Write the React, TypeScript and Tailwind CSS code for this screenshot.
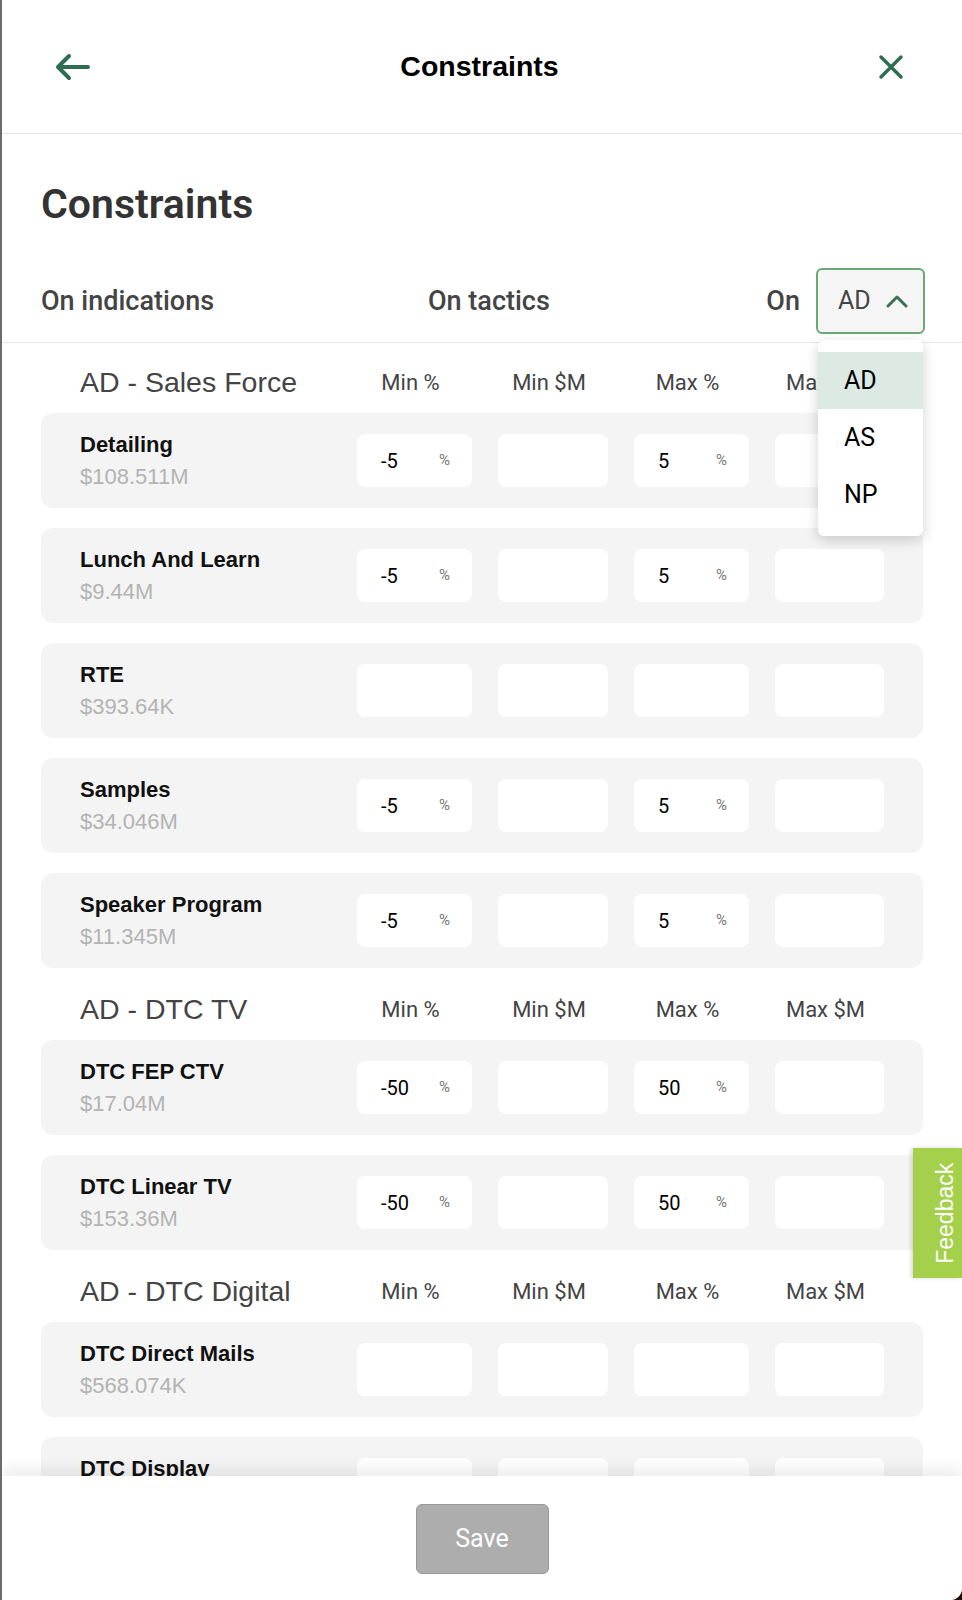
import { useState } from "react"

type Row = { name: string; value: string; min?: string; max?: string }
type Section = { title: string; rows: Row[] }

const sections: Section[] = [
  {
    title: "AD - Sales Force",
    rows: [
      { name: "Detailing", value: "$108.511M", min: "-5", max: "5" },
      { name: "Lunch And Learn", value: "$9.44M", min: "-5", max: "5" },
      { name: "RTE", value: "$393.64K" },
      { name: "Samples", value: "$34.046M", min: "-5", max: "5" },
      { name: "Speaker Program", value: "$11.345M", min: "-5", max: "5" },
    ],
  },
  {
    title: "AD - DTC TV",
    rows: [
      { name: "DTC FEP CTV", value: "$17.04M", min: "-50", max: "50" },
      { name: "DTC Linear TV", value: "$153.36M", min: "-50", max: "50" },
    ],
  },
  {
    title: "AD - DTC Digital",
    rows: [
      { name: "DTC Direct Mails", value: "$568.074K" },
      { name: "DTC Display", value: "$2.31M" },
    ],
  },
]

const columns = ["Min %", "Min $M", "Max %", "Max $M"]

const Field = ({ value, percent }: { value?: string; percent?: boolean }) => (
  <div className="flex h-[53px] items-center justify-between rounded-lg bg-white pl-6 pr-[22px]">
    <span className="font-['Roboto',sans-serif] text-[20px] text-black">{value}</span>
    {percent && <span className="font-['Roboto',sans-serif] text-[15px] text-[#777]">%</span>}
  </div>
)

const TacticCard = ({ row }: { row: Row }) => (
  <div className="mb-5 flex h-[95px] items-center rounded-xl bg-[#f4f4f4] pl-[39px] pr-[39px]">
    <div className="flex flex-1 flex-col font-['Liberation_Sans',Arial,sans-serif] text-[22px] leading-[32px]">
      <span className="font-bold text-[#111]">{row.name}</span>
      <span className="text-[#b3b3b3]">{row.value}</span>
    </div>
    <div className="grid grid-cols-[115px_110px_115px_109px] gap-x-[26px]">
      <Field value={row.min} percent={!!row.min} />
      <Field />
      <Field value={row.max} percent={!!row.max} />
      <Field />
    </div>
  </div>
)

const App = () => {
  const [open] = useState<boolean>(true)
  return (
    <div className="h-[1600px] w-[962px] bg-[#1b120c]">
      <div className="relative flex h-[1600px] flex-col overflow-hidden rounded-br-xl border-l-2 border-[#6b6b6b] bg-white">
        {/* header */}
        <div className="grid h-[134px] shrink-0 grid-cols-[1fr_auto_1fr] items-center border-b border-[#e4e4e4] pl-[53px] pr-[58px]">
          <svg width="36" height="28" viewBox="0 0 36 28" fill="none" stroke="#2f6d53" strokeWidth="4" strokeLinecap="round" strokeLinejoin="round">
            <path d="M33 14H3M14 3 3 14l11 11" />
          </svg>
          <h2 className="font-['Liberation_Sans',Arial,sans-serif] text-[28.5px] font-bold text-black">Constraints</h2>
          <svg className="justify-self-end" width="26" height="26" viewBox="0 0 26 26" fill="none" stroke="#2f6d53" strokeWidth="3.5" strokeLinecap="round">
            <path d="M3 3l20 20M23 3 3 23" />
          </svg>
        </div>

        {/* title + tabs */}
        <div className="shrink-0 border-b border-[#e8e8e8] px-[39px] pb-2 pt-[45px]">
          <h1 className="font-['Roboto',sans-serif] text-[41px] font-semibold leading-[50px] text-[#333]">Constraints</h1>
          <div className="mt-[39px] flex items-center font-['Roboto',sans-serif] text-[27px] font-medium text-[#444]">
            <span className="w-[387px]">On indications</span>
            <span>On tactics</span>
            <div className="-mr-[2px] ml-auto flex items-center gap-[16px]">
              <span>On</span>
              <div className="relative">
                <div className="flex h-[66px] w-[109px] items-center gap-[15px] rounded-md border-2 border-[#6aa972] bg-[#f5f5f5] pl-5 font-normal">
                  <span className="text-[25px] text-[#444]">AD</span>
                  <svg width="22" height="13" viewBox="0 0 22 13" fill="none" stroke="#3a7356" strokeWidth="3" strokeLinecap="round" strokeLinejoin="round">
                    <path d="M2 11 11 2l9 9" />
                  </svg>
                </div>
                {open && (
                  <ul className="absolute left-[2px] right-[2px] top-full z-20 mt-[6px] rounded-md bg-white pb-[13px] pt-3 text-[25px] font-normal text-black shadow-[0_4px_14px_rgba(0,0,0,0.18)]">
                    <li className="flex h-[57px] items-center bg-[#dde9e3] pl-[26px]">AD</li>
                    <li className="flex h-[57px] items-center pl-[26px]">AS</li>
                    <li className="flex h-[57px] items-center pl-[26px]">NP</li>
                  </ul>
                )}
              </div>
            </div>
          </div>
        </div>

        {/* constraints list */}
        <div className="flex-1 overflow-hidden px-[39px] pt-[18px]">
          {sections.map((section) => (
            <div key={section.title}>
              <div className="mb-[10px] flex h-[42px] items-center pr-[43px]">
                <span className="flex-1 pl-[39px] font-['Liberation_Sans',Arial,sans-serif] text-[28.5px] text-[#444]">{section.title}</span>
                <div className="grid grid-cols-[115px_110px_115px_109px] gap-x-[26px] font-['Roboto',sans-serif] text-[22px] text-[#444]">
                  {columns.map((c) => (
                    <span key={c} className="text-center">{c}</span>
                  ))}
                </div>
              </div>
              {section.rows.map((row) => (
                <TacticCard key={row.name} row={row} />
              ))}
            </div>
          ))}
        </div>

        {/* footer */}
        <div className="relative z-10 flex h-[124px] shrink-0 items-center justify-center bg-white shadow-[0_-8px_14px_rgba(0,0,0,0.07)]">
          <button className="mt-[2px] h-[70px] w-[133px] rounded-md border border-[#999] bg-[#adadad] font-['Roboto',sans-serif] text-[25px] text-white">
            Save
          </button>
        </div>

        {/* feedback tab */}
        <div className="absolute right-0 top-[1148px] z-30 flex h-[130px] w-[49px] items-center justify-center bg-[#a5d04b] pl-[16px] shadow-[-2px_0_4px_rgba(0,0,0,0.15)]">
          <span className="-rotate-90 whitespace-nowrap font-['Liberation_Sans',Arial,sans-serif] text-[23px] text-white">Feedback</span>
        </div>
      </div>
    </div>
  )
}

export default App
